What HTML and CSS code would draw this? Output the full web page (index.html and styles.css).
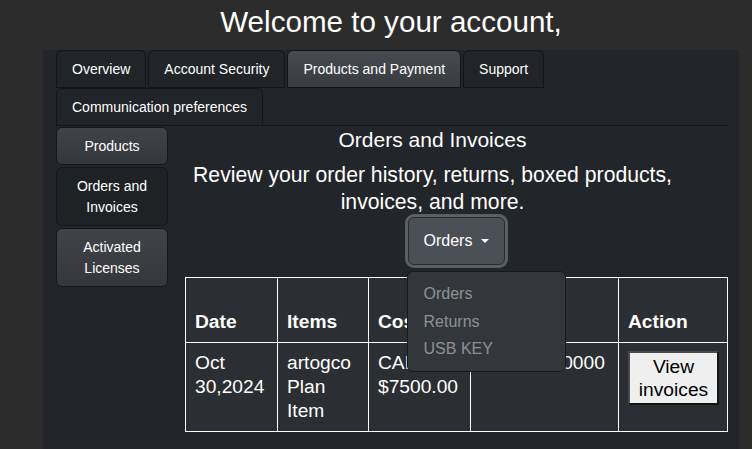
FILE: index.html
```html
<!DOCTYPE html>
<html>
<head>
<meta charset="utf-8">
<title>Account</title>
<link rel="stylesheet" href="styles.css">
</head>
<body>
<div class="page">
  <h1 class="title">Welcome to your account,</h1>
  <div class="panel">
    <ul class="tabs">
      <li class="tab">Overview</li>
      <li class="tab">Account Security</li>
      <li class="tab active">Products and Payment</li>
      <li class="tab">Support</li>
      <li class="tab">Communication preferences</li>
    </ul>
    <div class="body">
      <nav class="side">
        <div class="pill light">Products</div>
        <div class="pill dark">Orders and Invoices</div>
        <div class="pill light">Activated Licenses</div>
      </nav>
      <main class="main">
        <div class="intro">
          <h2 class="heading">Orders and Invoices</h2>
          <p class="lead">Review your order history, returns, boxed products, invoices, and more.</p>
        </div>
        <div class="dropdown">
          <button class="dd-btn">Orders<span class="caret"></span></button>
          <ul class="dd-menu">
            <li class="dd-item">Orders</li>
            <li class="dd-item">Returns</li>
            <li class="dd-item">USB KEY</li>
          </ul>
        </div>
        <table class="orders">
          <colgroup>
            <col class="c-date">
            <col class="c-items">
            <col class="c-cost">
            <col class="c-num">
            <col class="c-act">
          </colgroup>
          <thead>
            <tr>
              <th>Date</th>
              <th>Items</th>
              <th>Cost</th>
              <th>Order #</th>
              <th>Action</th>
            </tr>
          </thead>
          <tbody>
            <tr>
              <td>Oct 30,2024</td>
              <td>artogco Plan Item</td>
              <td>CAD $7500.00</td>
              <td>ABC12340000</td>
              <td><button class="view">View invoices</button></td>
            </tr>
          </tbody>
        </table>
      </main>
    </div>
  </div>
</div>
</body>
</html>
```

FILE: styles.css
```css
* { box-sizing: border-box; }
html, body {
  margin: 0;
  padding: 0;
  background: #2c2c2c;
  height: 100%;
  overflow: hidden;
}
body {
  font-family: "Liberation Sans", Arial, Helvetica, sans-serif;
  color: #ffffff;
}
.page {
  margin-left: 43px;
  width: 696px;
}
.title {
  margin: 0 0 11px 0;
  padding-top: 5px;
  font-size: 29.6px;
  line-height: 34px;
  font-weight: normal;
  text-align: center;
}
.panel {
  background: #222529;
  padding: 0 12px 0 13px;
  height: 399px;
}
.tabs {
  list-style: none;
  margin: 0;
  padding: 0;
  display: flex;
  flex-wrap: wrap;
  column-gap: 2px;
  row-gap: 1px;
  border-bottom: 1px solid #121416;
}
.tab {
  height: 38px;
  padding: 0 15px;
  font-size: 14px;
  line-height: 36px;
  border: 1px solid #121416;
  border-radius: 6px 6px 0 0;
  background: #212428;
  margin-bottom: -1px;
}
.tab.active {
  background: linear-gradient(#474b50, #383c41);
}
.body {
  display: flex;
  align-items: flex-start;
  padding-top: 1px;
}
.side {
  width: 112px;
  flex: none;
  display: flex;
  flex-direction: column;
  gap: 2px;
}
.pill {
  border: 1px solid #141618;
  border-radius: 6px;
  padding: 7.5px 6px;
  font-size: 14px;
  line-height: 21px;
  text-align: center;
}
.pill.light {
  background: linear-gradient(#404347, #34373b);
}
.pill.dark {
  background: #1f2225;
}
.main {
  flex: 1;
  margin-left: 17px;
  text-align: center;
}
.intro {
  padding-right: 48px;
}
.heading {
  margin: 0;
  font-size: 21px;
  line-height: 26px;
  font-weight: normal;
}
.lead {
  margin: 8px 0 0 0;
  font-size: 21.2px;
  line-height: 27px;
}
.dropdown {
  position: relative;
  display: inline-block;
  margin-top: 2px;
}
.dd-btn {
  display: block;
  font-family: inherit;
  font-size: 16px;
  line-height: 24px;
  color: #ffffff;
  background: #4a5055;
  border: 1px solid #2a2d30;
  border-radius: 6px;
  padding: 11px 15px;
  box-shadow: 0 0 0 3px #5a5f64;
}
.caret {
  display: inline-block;
  margin-left: 9px;
  vertical-align: 3px;
  border-top: 4.8px solid #ffffff;
  border-left: 4.8px solid transparent;
  border-right: 4.8px solid transparent;
}
.dd-menu {
  position: absolute;
  left: -1px;
  top: 100%;
  margin: 6px 0 0 0;
  width: 159px;
  list-style: none;
  padding: 8px 0;
  background: #33363a;
  border: 1px solid #17191b;
  border-radius: 6px;
  text-align: left;
  z-index: 5;
}
.dd-item {
  padding: 0 16px;
  font-size: 16px;
  line-height: 27.5px;
  color: #8d9196;
}
.orders {
  margin-top: 12px;
  width: 542px;
  table-layout: fixed;
  border-collapse: collapse;
  background: #2b2e32;
  text-align: left;
}
.orders th, .orders td {
  border: 1px solid #ffffff;
  padding: 8px 9px;
  font-size: 19.2px;
  line-height: 24px;
}
.orders th {
  height: 65px;
  vertical-align: bottom;
  font-weight: bold;
}
.orders td {
  vertical-align: top;
}
.c-date { width: 92px; }
.c-items { width: 91px; }
.c-cost { width: 102px; }
.c-num { width: 148px; }
.c-act { width: 109px; }
.view {
  font-family: inherit;
  font-size: 19.2px;
  line-height: 23px;
  color: #000000;
  background: #efefef;
  border: 2px solid;
  border-color: #4a4a4a #151515 #151515 #4a4a4a;
  padding: 2px 7px;
  width: 91px;
}
```
